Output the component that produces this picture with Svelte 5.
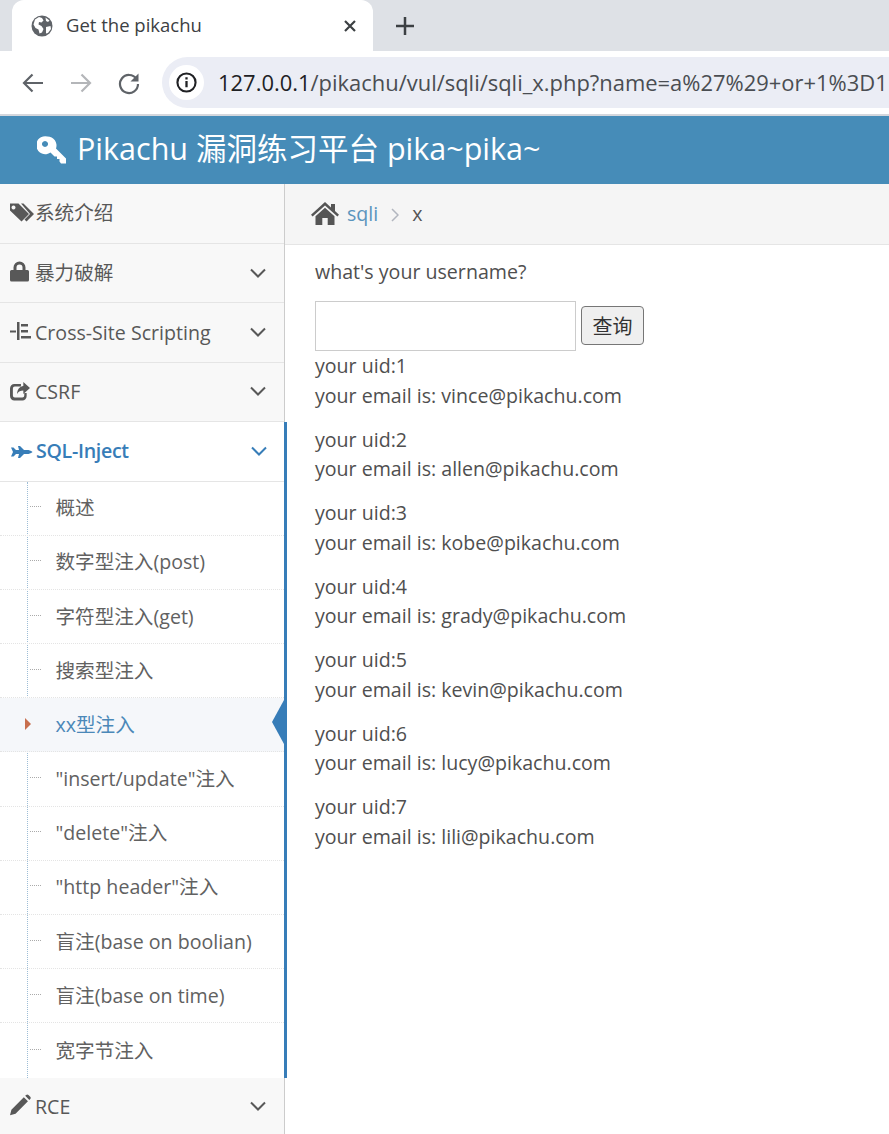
<script>
	const navTop = [
		{ label: '系统介绍', icon: 'tag', arrow: false, lift: 'lift-2' },
		{ label: '暴力破解', icon: 'lock', arrow: true, lift: 'lift-1' },
		{ label: 'Cross-Site Scripting', icon: 'indent', arrow: true, lift: '' },
		{ label: 'CSRF', icon: 'share', arrow: true, lift: '' }
	];

	const subItems = [
		'概述',
		'数字型注入(post)',
		'字符型注入(get)',
		'搜索型注入',
		'xx型注入',
		'"insert/update"注入',
		'"delete"注入',
		'"http header"注入',
		'盲注(base on boolian)',
		'盲注(base on time)',
		'宽字节注入'
	];

	const users = [
		{ uid: 1, email: 'vince@pikachu.com' },
		{ uid: 2, email: 'allen@pikachu.com' },
		{ uid: 3, email: 'kobe@pikachu.com' },
		{ uid: 4, email: 'grady@pikachu.com' },
		{ uid: 5, email: 'kevin@pikachu.com' },
		{ uid: 6, email: 'lucy@pikachu.com' },
		{ uid: 7, email: 'lili@pikachu.com' }
	];
</script>

{#snippet chevron()}
	<svg class="chevron" viewBox="0 0 16 10" width="16" height="10">
		<path d="M1 1.500l7 7 7-7" fill="none" stroke="currentColor" stroke-width="2" />
	</svg>
{/snippet}

{#snippet navIcon(name)}
	<svg class="nav-icon" viewBox="0 0 24 24" width="24" height="24" fill="currentColor">
		{#if name === 'tag'}
			<path d="M0 2.500h8.500L19 13l-7.500 7.500L0 9.500zM3.500 4.500a2 2 0 1 0 .01 0z" fill-rule="evenodd" />
			<path d="M11 2.500h2.500L24 13l-7.500 7.500-2-2 5.500-5.500z" />
		{:else if name === 'lock'}
			<path d="M3.500 9V6.500a6 6 0 0 1 12 0V9h2A1.500 1.500 0 0 1 19 10.500V19a1.500 1.500 0 0 1-1.500 1.500h-16A1.500 1.500 0 0 1 0 19v-8.500A1.500 1.500 0 0 1 1.500 9zm3 0h6V6.500a3 3 0 0 0-6 0z" fill-rule="evenodd" />
		{:else if name === 'indent'}
			<path d="M0 10.500h6v2H0zM7 2h2.500v18H7zM11 4h7v2.500h-7zM11 10h7v2.500h-7zM11 16h10v2.500H11z" />
		{:else if name === 'share'}
			<g transform="translate(-1.400 0) scale(.95 1)">
				<path d="M6 5h7v2.500H6.500A2 2 0 0 0 4.500 9.500v7a2 2 0 0 0 2 2h8a2 2 0 0 0 2-2V14h2.500v3a4.500 4.500 0 0 1-4.500 4.500H6A4.500 4.500 0 0 1 1.500 17V9.500A4.500 4.500 0 0 1 6 5z" />
				<path d="M15.500 3L22.500 9l-7 6v-3.500c-3 0-5 .8-6.500 3.500 0-5 3-7.500 6.500-8z" />
			</g>
		{:else if name === 'plane'}
			<path d="M1 8.500h2.500L6 11h3L8 7h2l4 4h4.500c2 .4 3.500 1.300 4 2-.5.7-2 1.600-4 2H14l-4 4H8l1-4H6l-2.500 2.500H1L3 13z" />
		{:else if name === 'pencil'}
			<g transform="translate(-.9 0) scale(.92)">
				<path d="M1 23l1.500-6L16 3.500l4.500 4.500L7 21.500zM17.500 2l1-1a2 2 0 0 1 2.500 0l2 2a2 2 0 0 1 0 2.500l-1 1z" />
			</g>
		{/if}
	</svg>
{/snippet}

<div class="page">
	<div class="tabstrip">
		<div class="tab">
			<svg class="globe" viewBox="0 0 22 22" width="22" height="22">
				<circle cx="11" cy="11" r="10.500" fill="#5f6368" />
				<path d="M4 4.500l4-2.500 3 1 1.500 2.500-2 2-2.500-.5-.5 2.500 3 1.500 2 3-1.500 3.500-2.500 1-1-4-3-1.500-2-3.500zM14.500 2.500l4 3-1.500 1.500-2-1zM15 12l4.500-1 .5 3-3 4-2 .5z" fill="#fff" />
			</svg>
			<span class="tab-title">Get the pikachu</span>
			<svg class="tab-close" viewBox="0 0 12 12" width="12" height="12">
				<path d="M1 1l10 10M11 1L1 11" stroke="#3c4043" stroke-width="2.200" fill="none" />
			</svg>
		</div>
		<svg class="new-tab" viewBox="0 0 18 18" width="18" height="18">
			<path d="M9 0v18M0 9h18" stroke="#3c4043" stroke-width="2.500" fill="none" />
		</svg>
	</div>

	<div class="toolbar">
		<svg class="tool" viewBox="0 0 24 24" width="24" height="24">
			<path d="M22 12H3.500M11.500 3.500L3 12l8.500 8.500" fill="none" stroke="#5f6368" stroke-width="2.200" />
		</svg>
		<svg class="tool" viewBox="0 0 24 24" width="24" height="24">
			<path d="M2 12h18.500M12.500 3.500L21 12l-8.500 8.500" fill="none" stroke="#b4b6b9" stroke-width="2.200" />
		</svg>
		<svg class="tool" viewBox="0 0 24 24" width="24" height="24">
			<path d="M19.500 8A9 9 0 1 0 21 13" fill="none" stroke="#5f6368" stroke-width="2.200" />
			<path d="M21.500 2.500v8h-8z" fill="#5f6368" />
		</svg>
		<div class="omnibox">
			<span class="info-chip">
				<svg viewBox="0 0 22 22" width="21" height="21">
					<circle cx="11" cy="11" r="9.500" fill="none" stroke="#202124" stroke-width="2.200" />
					<path d="M11 9.500v6.500M11 5.500v2.300" stroke="#202124" stroke-width="2.400" fill="none" />
				</svg>
			</span>
			<span class="url">127.0.0.1<span class="url-path">/pikachu/vul/sqli/sqli_x.php?name=a%27%29+or+1%3D1</span></span>
		</div>
	</div>

	<header class="navbar">
		<svg class="key" viewBox="0 0 30 30" width="30" height="30">
			<path d="M10.500 1.500a9 9 0 0 1 8.500 12L29 23.500v5h-5l-1.500-2v-2.500h-2.500v-2.500h-2.500L13.500 17.500A9 9 0 1 1 10.500 1.500zM8 6a3 3 0 1 0 .01 0z" fill="#fff" fill-rule="evenodd" />
		</svg>
		<span>Pikachu 漏洞练习平台 pika~pika~</span>
	</header>

	<div class="layout">
		<nav class="sidebar">
			{#each navTop as item}
				<div class="nav-row">
					{@render navIcon(item.icon)}
					<span class="nav-label {item.lift}">{item.label}</span>
					{#if item.arrow}{@render chevron()}{/if}
				</div>
			{/each}

			<div class="open-group">
				<div class="nav-row active">
					{@render navIcon('plane')}
					<span class="nav-label">SQL-Inject</span>
					{@render chevron()}
				</div>
				<ul class="submenu">
					{#each subItems as sub}
						<li class:current={sub === 'xx型注入'}>{sub}</li>
					{/each}
				</ul>
			</div>

			<div class="nav-row">
				{@render navIcon('pencil')}
				<span class="nav-label">RCE</span>
				{@render chevron()}
			</div>
		</nav>

		<main class="content">
			<div class="breadcrumb">
				<svg class="home" viewBox="0 0 28 24" width="28" height="24">
					<path d="M14 1l6 5.500V3h4v7l4 3.800-1.600 1.800L14 4.500 1.600 15.600 0 13.800zM14 6.800l9.500 8.500v8.700h-6.800v-7h-5.400v7H4.500v-8.700z" fill="#555" />
				</svg>
				<span class="crumb-link">sqli</span>
				<svg class="crumb-sep" viewBox="0 0 8 14" width="8" height="14">
					<path d="M1 1l6 6-6 6" fill="none" stroke="#b2b6bf" stroke-width="1.500" />
				</svg>
				<span class="crumb-current">x</span>
			</div>

			<div class="body">
				<p class="question">what's your username?</p>
				<form class="search" onsubmit={(e) => e.preventDefault()}>
					<input type="text" />
					<button type="submit">查询</button>
				</form>
				{#each users as user}
					<p class="result">your uid:{user.uid}<br />your email is: {user.email}</p>
				{/each}
			</div>
		</main>
	</div>
</div>

<style>
	:global(body) {
		margin: 0;
		background: #fff;
		overflow: hidden;
	}

	.page {
		width: 889px;
		height: 1134px;
		overflow: hidden;
		font-family: 'Open Sans', 'Noto Sans CJK SC', sans-serif;
		color: #585858;
	}

	.tabstrip {
		height: 51px;
		background: #dee1e6;
		display: flex;
		align-items: flex-start;
		padding-left: 12px;
		box-sizing: border-box;
	}

	.tab {
		width: 361px;
		height: 51px;
		background: #fff;
		border-radius: 12px 12px 0 0;
		display: flex;
		align-items: center;
		padding: 0 17px 0 19px;
		box-sizing: border-box;
	}

	.globe {
		margin-right: 13px;
	}

	.tab-title {
		flex: 1;
		font-size: 18.500px;
		color: #3c4043;
		padding-bottom: 2px;
	}

	.new-tab {
		margin: 17px 0 0 23px;
	}

	.toolbar {
		height: 63px;
		background: #fff;
		display: flex;
		align-items: center;
		padding: 0 0 0 21px;
		box-sizing: border-box;
	}

	.tool {
		margin-right: 24px;
		flex: none;
	}

	.omnibox {
		flex: 1;
		margin-left: -3px;
		height: 51px;
		background: #ebedf5;
		border-radius: 26px 0 0 26px;
		display: flex;
		align-items: center;
		padding-left: 7px;
		white-space: nowrap;
		overflow: hidden;
	}

	.info-chip {
		width: 35px;
		height: 35px;
		border-radius: 50%;
		background: #fff;
		display: flex;
		align-items: center;
		justify-content: center;
		margin-right: 14px;
		flex: none;
	}

	.url {
		font-size: 21.950px;
		color: #202124;
	}

	.url-path {
		color: #4a4d52;
	}

	.navbar {
		height: 68px;
		margin-top: 2px;
		box-shadow: 0 -2px 0 #d4d7dd;
		background: #468cb8;
		color: #fff;
		display: flex;
		align-items: center;
		padding: 0 0 6px 37px;
		font-size: 30.500px;
		gap: 10px;
		box-sizing: border-box;
	}

	.key {
		flex: none;
		margin-top: 6px;
	}

	.layout {
		display: flex;
		height: 950px;
	}

	.sidebar {
		width: 285px;
		flex: none;
		box-sizing: border-box;
		border-right: 1px solid #ccc;
		background: #f8f8f8;
		padding-top: 0.600px;
	}

	.nav-row {
		height: 59.400px;
		box-sizing: border-box;
		display: flex;
		align-items: center;
		padding: 0 18px 1px 10px;
		background: #f8f8f8;
		border-bottom: 1px solid #e5e5e5;
		font-size: 19.600px;
		color: #585858;
	}

	.nav-icon {
		flex: none;
		width: 24px;
		height: 24px;
		margin-right: 1px;
	}

	.nav-label {
		flex: 1;
	}

	.lift-1 {
		margin-bottom: 2px;
	}

	.lift-2 {
		margin-bottom: 4px;
	}

	.chevron {
		flex: none;
	}

	.open-group {
		margin-right: -3px;
		border-right: 3px solid #377db8;
		position: relative;
	}

	.nav-row.active {
		background: #fff;
		color: #377db8;
		font-weight: 600;
		padding-right: 17px;
	}

	.nav-row.active .nav-label {
		letter-spacing: -0.300px;
		padding-left: 1px;
	}

	.submenu {
		list-style: none;
		margin: 0;
		padding: 0;
		background: #fff;
		position: relative;
	}

	.submenu::before {
		content: '';
		position: absolute;
		left: 27px;
		top: 0;
		bottom: 0;
		border-left: 1px dotted #9dbdd6;
	}

	.submenu li {
		height: 54.200px;
		box-sizing: border-box;
		display: flex;
		align-items: center;
		padding: 0 0 3px 55.500px;
		font-size: 19.600px;
		color: #616161;
		border-bottom: 1px dotted #e4e4e4;
		position: relative;
	}

	.submenu li:last-child {
		border-bottom: 0;
	}

	.submenu li::before {
		content: '';
		position: absolute;
		left: 30px;
		top: 50%;
		margin-top: -2px;
		width: 11px;
		border-top: 1px dotted #aaa;
	}

	.submenu li.current {
		background: #f5f7fa;
		color: #4b88b8;
	}

	.submenu li.current::before {
		left: 25px;
		top: 20px;
		margin-top: 0;
		width: 0;
		height: 0;
		border-top: 6px solid transparent;
		border-bottom: 6px solid transparent;
		border-left: 6px solid #c86f4e;
	}

	.submenu li.current::after {
		content: '';
		position: absolute;
		right: 0;
		top: 2px;
		width: 0;
		height: 0;
		border-top: 22px solid transparent;
		border-bottom: 22px solid transparent;
		border-right: 12px solid #377db8;
	}

	.content {
		flex: 1;
		min-width: 0;
	}

	.breadcrumb {
		height: 61px;
		box-sizing: border-box;
		background: #f5f5f5;
		border-bottom: 1px solid #e5e5e5;
		display: flex;
		align-items: center;
		padding: 0 0 2px 26px;
		font-size: 19.600px;
	}

	.home {
		margin-right: 8px;
	}

	.crumb-link {
		color: #5a94bd;
	}

	.crumb-sep {
		margin: 3px 13px 0 13px;
	}

	.crumb-current {
		color: #555;
	}

	.body {
		padding: 12.300px 0 0 30px;
		font-size: 19.600px;
		line-height: 29.700px;
		color: #4f4f4f;
	}

	p {
		margin: 0;
	}

	.search {
		display: flex;
		align-items: center;
		gap: 5px;
		margin-top: 14px;
	}

	input {
		width: 261px;
		height: 50px;
		box-sizing: border-box;
		border: 1px solid #ccc;
		background: #fff;
		padding: 0;
		margin: 0;
		outline: 0;
	}

	button {
		width: 63px;
		height: 39px;
		box-sizing: border-box;
		border: 1px solid #767676;
		border-radius: 4px;
		background: #efefef;
		color: #333;
		font-family: 'Noto Sans CJK SC', sans-serif;
		font-size: 20px;
		padding: 0;
		margin-bottom: 2px;
	}

	.result {
		margin-bottom: 14.100px;
	}
</style>
